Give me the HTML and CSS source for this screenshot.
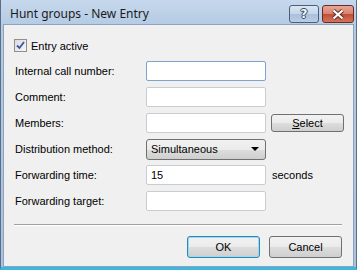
FILE: index.html
```html
<!DOCTYPE html>
<html lang="en">
<head>
    <meta charset="UTF-8">
    <title>Hunt groups - New Entry</title>
    <link rel="stylesheet" href="styles.css">
</head>
<body>

    <div class="window">
        <!-- Title bar -->
        <div class="titlebar">
            <span class="title">Hunt groups - New Entry</span>
            <div class="caption-buttons">
                <button class="cap help">?</button>
                <button class="cap close">
                    <svg width="14" height="11" viewBox="0 0 14 11">
                        <path d="M2.5 1.5 L11.5 9.5 M11.5 1.5 L2.5 9.5" stroke="#5a2a22" stroke-width="4"/>
                        <path d="M2.5 1.5 L11.5 9.5 M11.5 1.5 L2.5 9.5" stroke="#fff" stroke-width="2.2"/>
                    </svg>
                </button>
            </div>
        </div>

        <!-- Dialog body -->
        <div class="client">
            <label class="check-row">
                <span class="checkbox">
                    <svg width="9" height="9" viewBox="0 0 9 9"><path d="M1 4.5 L3.5 7 L8 1" fill="none" stroke="#3a56a6" stroke-width="1.8"/></svg>
                </span>
                Entry active
            </label>

            <div class="form">
                <span class="label">Internal call number:</span>
                <input class="field focused" type="text">
                <span></span>

                <span class="label">Comment:</span>
                <input class="field" type="text">
                <span></span>

                <span class="label">Members:</span>
                <input class="field" type="text">
                <button class="btn select-btn"><u>S</u>elect</button>

                <span class="label">Distribution method:</span>
                <div class="dropdown">
                    <span>Simultaneous</span>
                    <span class="arrow"></span>
                </div>
                <span></span>

                <span class="label">Forwarding time:</span>
                <input class="field" type="text" value="15">
                <span class="unit">seconds</span>

                <span class="label">Forwarding target:</span>
                <input class="field" type="text">
                <span></span>
            </div>

            <div class="separator"></div>

            <div class="actions">
                <button class="btn default">OK</button>
                <button class="btn">Cancel</button>
            </div>
        </div>
    </div>

</body>
</html>
```

FILE: styles.css
```css
/* Global Styles */
* {
    margin: 0;
    padding: 0;
    box-sizing: border-box;
}

body {
    width: 357px;
    height: 270px;
    overflow: hidden;
    font-family: 'Liberation Sans', Arial, sans-serif;
    font-size: 11px;
    color: #000;
}

/* Window frame */
.window {
    width: 357px;
    height: 270px;
    display: flex;
    flex-direction: column;
    background: linear-gradient(180deg, #c6d8ec 0px, #b4cbe4 25px, #a8c2e0 100%);
    border: 1px solid #5b6e85;
    border-top: none;
    border-bottom: 3px solid #3fb6dc;
    padding: 0 2px 0 2px;
}

.titlebar {
    height: 24px;
    display: flex;
    align-items: center;
    justify-content: space-between;
    padding-left: 7px;
}

.title {
    font-family: 'Noto Sans', 'DejaVu Sans', sans-serif;
    font-size: 12px;
    color: #1b1b1b;
    margin-top: 2px;
}

.caption-buttons {
    display: flex;
    gap: 3px;
    align-self: flex-start;
    margin-top: 5px;
}

.cap {
    height: 18px;
    border: 1px solid #4c5f7a;
    border-radius: 3px;
    display: flex;
    align-items: center;
    justify-content: center;
}

.help {
    width: 30px;
    background: linear-gradient(180deg, #dbe6f3 0%, #c3d5ea 50%, #a9c0dc 51%, #b9cde6 100%);
    font-family: 'DejaVu Sans', sans-serif;
    font-weight: bold;
    font-size: 12px;
    color: #f4f7fb;
    text-shadow: 0 0 1px #394b66, 1px 0 0 #394b66, -1px 0 0 #394b66, 0 1px 0 #394b66, 0 -1px 0 #394b66;
}

.close {
    width: 32px;
    border-color: #6b2a22;
    background: linear-gradient(180deg, #e8a596 0%, #d7826f 50%, #c24b33 51%, #d2745e 100%);
}

/* Client area */
.client {
    flex: 1;
    background: #f0f0f0;
    border: 1px solid #8ea3bb;
    padding: 13px 11px 0 10px;
}

.check-row {
    display: flex;
    align-items: center;
    gap: 4px;
    height: 15px;
}

.checkbox {
    width: 13px;
    height: 13px;
    border: 1px solid #8f8f8f;
    background: linear-gradient(135deg, #dcdcdc, #f6f6f6);
    display: flex;
    align-items: center;
    justify-content: center;
}

.form {
    display: grid;
    grid-template-columns: 127px 120px 74px;
    grid-auto-rows: 20px;
    row-gap: 6px;
    column-gap: 5px;
    margin-top: 8px;
    align-items: center;
}

.label {
    padding-left: 1px;
}

.field {
    height: 20px;
    width: 120px;
    border: 1px solid #c9cdd2;
    border-radius: 2px;
    background: #fff;
    font-family: inherit;
    font-size: 11px;
    padding: 0 4px;
    outline: none;
}

.field.focused {
    border-color: #7da2ce;
}

.dropdown {
    height: 21px;
    border: 1px solid #707070;
    border-radius: 3px;
    background: linear-gradient(180deg, #f2f2f2 0%, #ebebeb 50%, #dddddd 51%, #cfcfcf 100%);
    display: flex;
    align-items: center;
    justify-content: space-between;
    padding: 0 6px 0 4px;
}

.arrow {
    width: 0;
    height: 0;
    border-left: 4px solid transparent;
    border-right: 4px solid transparent;
    border-top: 4px solid #000;
}

.unit {
    padding-left: 1px;
}

.btn {
    font-family: inherit;
    font-size: 11px;
    color: #000;
    border: 1px solid #707070;
    border-radius: 3px;
    background: linear-gradient(180deg, #f2f2f2 0%, #ebebeb 50%, #dddddd 51%, #cfcfcf 100%);
}

.select-btn {
    width: 73px;
    height: 18px;
}

.btn.default {
    border-color: #3c7fb1;
    box-shadow: inset 0 0 0 1px #8ee0f8;
}

.separator {
    margin-top: 13px;
    border-top: 1px solid #a0a0a0;
    border-bottom: 1px solid #ffffff;
}

.actions {
    display: flex;
    justify-content: flex-end;
    gap: 9px;
    margin-top: 10px;
}

.actions .btn {
    width: 73px;
    height: 22px;
}
```
